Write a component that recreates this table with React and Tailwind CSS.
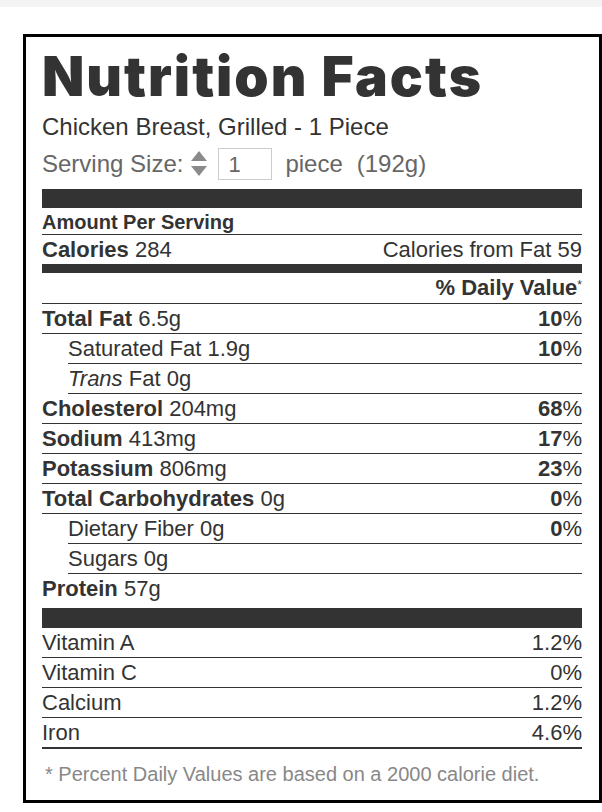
import React from 'react';

const nutrients = [
  { label: 'Total Fat', amount: '6.5g', dv: '10', bold: true },
  { label: 'Saturated Fat', amount: '1.9g', dv: '10', indent: true },
  { label: 'Fat', amount: '0g', italic: 'Trans', indent: true },
  { label: 'Cholesterol', amount: '204mg', dv: '68', bold: true },
  { label: 'Sodium', amount: '413mg', dv: '17', bold: true },
  { label: 'Potassium', amount: '806mg', dv: '23', bold: true },
  { label: 'Total Carbohydrates', amount: '0g', dv: '0', bold: true },
  { label: 'Dietary Fiber', amount: '0g', dv: '0', indent: true },
  { label: 'Sugars', amount: '0g', indent: true },
];

const vitamins = [
  { label: 'Vitamin A', value: '1.2%' },
  { label: 'Vitamin C', value: '0%' },
  { label: 'Calcium', value: '1.2%' },
  { label: 'Iron', value: '4.6%' },
];

function SortIcon() {
  return (
    <svg width="18" height="28" viewBox="0 0 18 28" className="shrink-0">
      <path d="M9 1 L17 11 L1 11 Z" fill="#8a8a8a" />
      <path d="M1 16 L17 16 L9 26 Z" fill="#8a8a8a" />
    </svg>
  );
}

function NutrientRow({ item }) {
  return (
    <div
      className={`flex justify-between border-b border-[#333] leading-[29px] ${
        item.indent ? 'ml-[26px]' : ''
      }`}
    >
      <span>
        {item.italic && <i>{item.italic} </i>}
        <span className={item.bold ? 'font-bold' : ''}>{item.label}</span> {item.amount}
      </span>
      {item.dv && (
        <span>
          <b>{item.dv}</b>%
        </span>
      )}
    </div>
  );
}

export default function App() {
  return (
    <div className="min-h-screen bg-white text-[#333]" style={{ fontFamily: '"Liberation Sans", Arial, sans-serif' }}>
      <div className="h-[7px] bg-[#f4f4f4]" />
      <div className="ml-[23px] mt-[27px] w-[579px] border-[3px] border-black pl-4 pr-[17px] pt-[12px] pb-[14px]">
        <h1
          className="text-[55px] leading-[55px] font-black tracking-[2px] text-[#333]"
          style={{ fontFamily: 'Inter, sans-serif' }}
        >
          Nutrition Facts
        </h1>
        <div className="mt-[8px] text-[24px] leading-[29px]">Chicken Breast, Grilled - 1 Piece</div>
        <div className="mt-[5px] flex h-[36px] items-center text-[24px] text-[#666]">
          <span>Serving Size:</span>
          <span className="ml-[7px]"><SortIcon /></span>
          <input
            type="text"
            defaultValue="1"
            className="ml-[10px] h-[32px] w-[54px] border border-[#ccc] px-[9px] text-[22px] text-[#666] outline-none"
          />
          <span className="ml-[13px]">piece</span>
          <span className="ml-[14px]">(192g)</span>
        </div>

        <div className="mt-[7px] h-[19px] bg-[#333]" />
        <div className="border-b border-[#333] pt-[2px] text-[20px] font-bold leading-[24px]">Amount Per Serving</div>
        <div className="flex justify-between text-[22px] leading-[29px]">
          <span>
            <b>Calories</b> 284
          </span>
          <span>Calories from Fat 59</span>
        </div>
        <div className="h-[9px] bg-[#333]" />
        <div className="border-b border-[#333] text-right text-[22px] font-bold leading-[30px]">
          % Daily Value<sup className="text-[12px] font-normal">*</sup>
        </div>

        <div className="text-[22px]">
          {nutrients.map((item) => (
            <NutrientRow key={item.label + item.amount} item={item} />
          ))}
          <div className="leading-[29px]">
            <b>Protein</b> 57g
          </div>
        </div>

        <div className="mt-[5px] h-[20px] bg-[#333]" />
        <div className="text-[22px]">
          {vitamins.map((v, i) => (
            <div
              key={v.label}
              className={`flex justify-between leading-[29px] border-[#333] ${
                i === vitamins.length - 1 ? 'border-b-2' : 'border-b'
              }`}
            >
              <span>{v.label}</span>
              <span>{v.value}</span>
            </div>
          ))}
        </div>
        <div className="mt-[13px] pl-[3px] text-[20px] leading-[24px] text-[#888]">
          * Percent Daily Values are based on a 2000 calorie diet.
        </div>
      </div>
    </div>
  );
}
